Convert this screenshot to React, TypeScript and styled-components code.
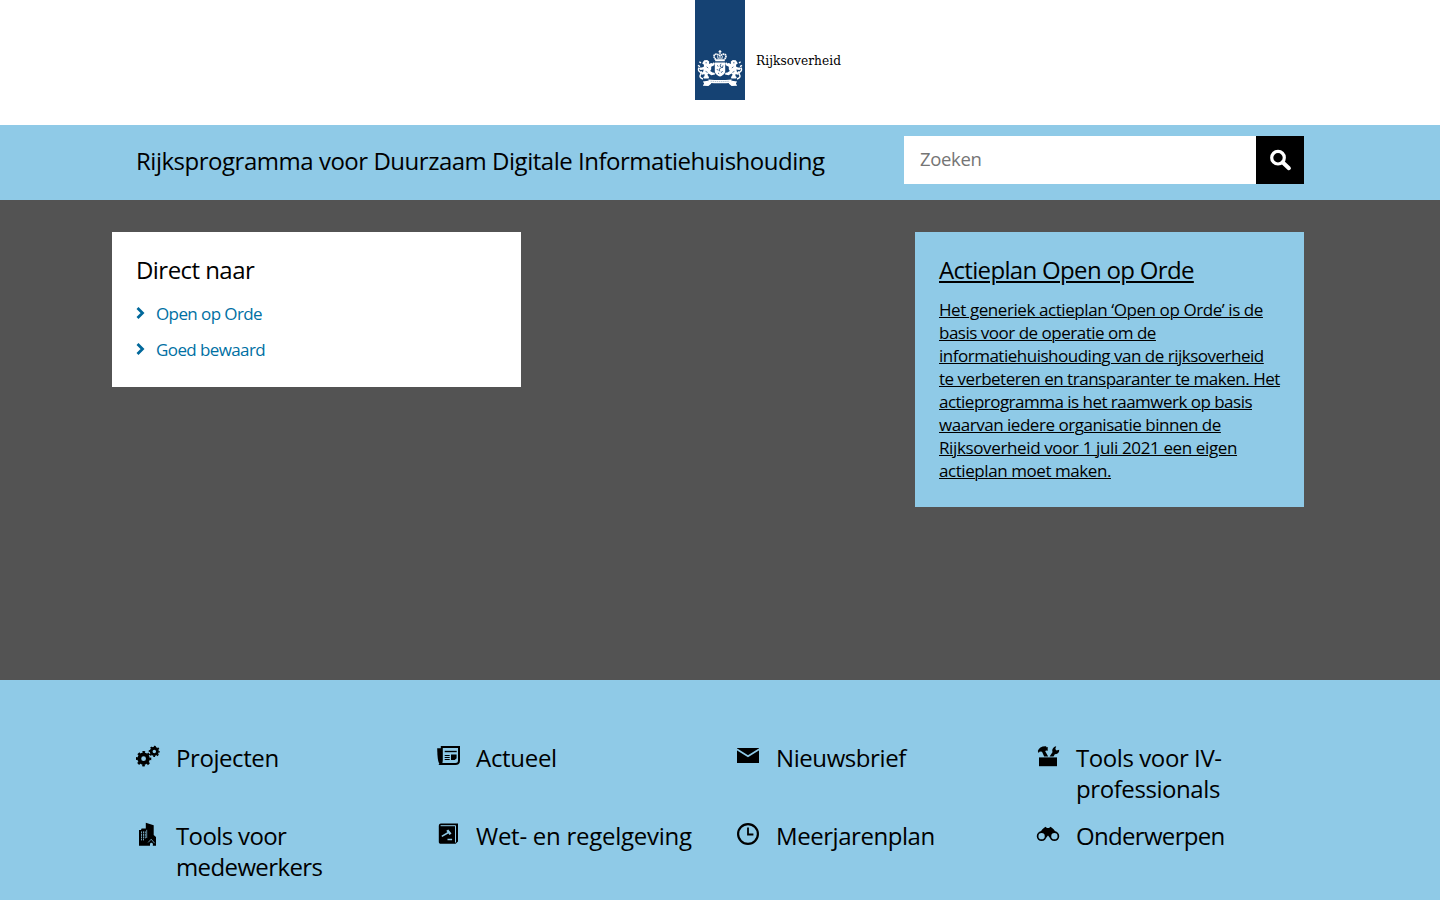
import React from 'react';
import styled, { createGlobalStyle } from 'styled-components';

const GlobalStyle = createGlobalStyle`
  *, *::before, *::after { box-sizing: border-box; }
  body {
    margin: 0;
    background: #fff;
    color: #000;
    font-family: "Open Sans", "Noto Sans", sans-serif;
    overflow: hidden;
  }
  h1, h2, p, ul { margin: 0; padding: 0; font-weight: 400; }
  ul { list-style: none; }
`;

const Page = styled.div`
  height: 900px;
  display: flex;
  flex-direction: column;
  overflow: hidden;
`;

const Header = styled.header`
  flex: none;
  height: 125px;
  display: flex;
  padding-left: 695px;
`;

const LogoRibbon = styled.svg`
  display: block;
  width: 50px;
  height: 100px;
`;

const LogoName = styled.span`
  margin: 50px 0 0 11px;
  font: 13.5px/20px "DejaVu Serif Condensed", "DejaVu Serif", serif;
  font-stretch: condensed;
  letter-spacing: 0.06px;
`;

const TitleBar = styled.div`
  flex: none;
  height: 75px;
  padding: 11px 136px 0;
  background: #8fcae7;
  display: flex;
  justify-content: space-between;
  align-items: flex-start;
`;

const SiteTitle = styled.h1`
  font-size: 24px;
  line-height: 49px;
  letter-spacing: -0.48px;
  white-space: nowrap;
`;

const SearchForm = styled.form`
  display: flex;
  width: 400px;
  height: 48px;
`;

const SearchInput = styled.input`
  flex: 1;
  min-width: 0;
  border: 0;
  border-radius: 0;
  background: #fff;
  padding: 0 16px 3px;
  font: 18.5px "Open Sans", sans-serif;
  letter-spacing: -0.35px;
  &::placeholder { color: #757575; opacity: 1; }
`;

const SearchButton = styled.button`
  width: 48px;
  border: 0;
  padding: 0;
  background: #000;
  display: grid;
  place-items: center;
`;

const Hero = styled.section`
  flex: none;
  height: 480px;
  padding: 32px 136px 0 112px;
  background: #535353;
  display: flex;
  justify-content: space-between;
  align-items: flex-start;
`;

const Card = styled.div<{ $width: number; $height: number; $tone: string }>`
  width: ${p => p.$width}px;
  height: ${p => p.$height}px;
  padding: 24px;
  background: ${p => p.$tone};
`;

const CardTitle = styled.h2<{ $tracking: number }>`
  font-size: 24px;
  line-height: 28px;
  letter-spacing: ${p => p.$tracking}px;
`;

const ShortcutList = styled.ul`
  margin-top: 12px;
`;

const Shortcut = styled.li`
  height: 36px;
  display: flex;
  align-items: center;
`;

const ShortcutLink = styled.a`
  display: flex;
  align-items: center;
  gap: 10px;
  color: #0070a3;
  font-size: 17px;
  line-height: 36px;
  letter-spacing: -0.6px;
  text-decoration: none;
`;

const Chevron = styled.svg`
  width: 10px;
  height: 12px;
  margin-bottom: 2px;
`;

const PlanLink = styled.a`
  color: #000;
  text-decoration: none;
`;

const PlanTitle = styled(CardTitle)`
  text-decoration: underline;
  text-decoration-thickness: 2px;
  text-underline-offset: 2px;
`;

const PlanText = styled.p`
  margin-top: 14px;
  font-size: 17px;
  line-height: 23px;
`;

const PlanLine = styled.span<{ $tracking: number }>`
  display: block;
  white-space: nowrap;
  letter-spacing: ${p => p.$tracking}px;
  text-decoration: underline;
  text-decoration-thickness: 1px;
  text-underline-offset: 1px;
`;

const Themes = styled.nav`
  flex: 1;
  padding: 62px 0 0 136px;
  background: #8fcae7;
`;

const ThemeGrid = styled.ul`
  display: grid;
  grid-template-columns: repeat(4, 300px);
  row-gap: 16px;
`;

const ThemeItem = styled.li`
  display: flex;
  gap: 16px;
  padding-right: 24px;
`;

const ThemeIcon = styled.svg`
  flex: none;
  width: 24px;
  height: 24px;
  margin-top: 2px;
`;

const ThemeLabel = styled.span<{ $tracking: number }>`
  font-size: 24px;
  line-height: 31px;
  letter-spacing: ${p => p.$tracking}px;
`;

const BLUE = '#8fcae7';

const Lion = () => (
  <g>
    <path
      d="M8 62l1.200-1.800 3-.2 2 1.600-.2 2.400 2.200-1 1.600.4.8-1.200 1.200 1-.6 2-3 1.600v2.400l-1 1.800 2.400 1.600 2 .2.400 1.800-3.600.6-3-1.800-1 1.400 1.600 2.400-.4 1.400H9l-.8-1.400 1.400-1.200-.2-2-2 .8-1.400-.8 2.200-2.600.4-2-3 .6-1.600-1.200.8-1.400 2.200.2 2-1-.2-2.200-1.600-.8z"
      fill="#fff"
    />
    <path d="M8 79c-3-1-3.600-2.600-2.600-4.200s.6-2.400-.8-3.200-1.400-2.600-.6-4M5 66.600l-2-1.200M6 63l-1.600-1.200M7.400 72.800l-1.600-1.200" fill="none" stroke="#fff" strokeWidth="1.400" />
    <path d="M10.400 62.800h1.600M11.600 66.800l1.600 1.200M10.600 71.400l2 1" stroke="#154273" strokeWidth=".7" />
  </g>
);

const CoatOfArms = () => (
  <LogoRibbon viewBox="0 0 50 100" aria-hidden="true">
    <rect width="50" height="100" fill="#154273" />
    <path d="M25 50v4M23.600 51.600h2.800" stroke="#fff" strokeWidth="1.200" />
    <path d="M20.800 59.600c-3-3-1.800-5.400.4-5.400 1.800 0 2.800 1.200 3.800 1.200s2-1.200 3.800-1.200c2.200 0 3.400 2.400.4 5.400" fill="none" stroke="#fff" strokeWidth="1.700" strokeDasharray="1.600 .4" />
    <path d="M25 55.500v4M22.600 56.200l.7 3M27.400 56.200l-.7 3" stroke="#fff" strokeWidth="1" />
    <rect x="20.200" y="59.200" width="9.600" height="2" rx=".5" fill="#fff" />
    <path d="M19.800 62.500h10.400v8.500c0 3-2.600 4.400-5.200 5.600-2.600-1.200-5.200-2.600-5.200-5.600z" fill="#fff" />
    <path d="M22 65.400l1.400 1M26 63.800l-1 2.400 1.800 1.200-2.600 1.600.6 2.400M28 65.400l-.6 2.600M21.800 69l1.400 1.600M27.600 71l-1.400 1.800M23 73l1.200.8" fill="none" stroke="#154273" strokeWidth=".8" />
    <Lion />
    <g transform="translate(50 0) scale(-1 1)"><Lion /></g>
    <path d="M13.500 79.500q11.500 1 23 0l.4 3.200q-11.900 1-23.800 0z" fill="#fff" />
    <path d="M12.900 80.800l-5 .8 1.200 2-1.300 2.200 5.600.2 3-2.400M37.100 80.800l5 .8-1.200 2 1.300 2.200-5.600.2-3-2.400" fill="#fff" />
    <path d="M15.500 81.200q9.500.8 19 0" fill="none" stroke="#154273" strokeWidth=".35" strokeDasharray="1.400 .7" />
  </LogoRibbon>
);

const Gear = ({ x, y, r }: { x: number; y: number; r: number }) => {
  const tooth = (2 * Math.PI * r * 0.86) / 16;
  return (
    <g fill="none" stroke="#000">
      <circle cx={x} cy={y} r={r * 0.56} strokeWidth={r * 0.5} />
      <circle cx={x} cy={y} r={r * 0.86} strokeWidth={r * 0.28} strokeDasharray={`${tooth} ${tooth}`} strokeDashoffset={tooth / 2} />
    </g>
  );
};

const GearsIcon = () => (
  <>
    <Gear x={7.6} y={14.7} r={7.7} />
    <Gear x={18.3} y={7.4} r={5.6} />
  </>
);

const NewspaperIcon = () => (
  <>
    <path d="M1.200 4.200h4v16.600H4.600C2 19.800 1.400 14 1.200 4.200z" />
    <path d="M5.800 3h17.200v13.500c0 2.300-1.200 3.500-3.500 3.500H4.800c1-1 1-2 1-4z" fill="none" stroke="#000" strokeWidth="2" />
    <path d="M8.700 7.500h12" stroke="#000" strokeWidth="1.400" />
    <path d="M8.700 11.500h5M8.700 13.500h5M8.700 15.500h5" stroke="#000" strokeWidth="1" />
    <path d="M15 10.600h5.600v3.600l-1.800 1.800H15z" />
  </>
);

const EnvelopeIcon = () => (
  <>
    <rect x="1" y="4" width="22" height="15" />
    <path d="M.8 5.300l11.200 7 11.200-7" fill="none" stroke={BLUE} strokeWidth="1.700" />
  </>
);

const ToolboxIcon = () => (
  <>
    <rect x="3" y="13.400" width="18" height="8.800" />
    <path d="M1.800 7C3 3.600 5.600 2.100 10.200 2.300v.9l1.500-.2v3.800l-1.700-.4-.8.800 3 5.200H8.200L6 7.800l-2.200-.2L2.600 9z" />
    <path d="M13.600 12.600l3-4.600c-1-2.400.6-5.400 3.600-5.800l-.9 2.800 1.200 1.500 2.700-.7c.3 3-2.200 4.800-4.200 4.300l-1.500 2.500z" />
  </>
);

const BuildingIcon = () => (
  <>
    <path d="M9.800 6.400V.8l7.900 2.400V13l2.300 2v8.800H3V8h2l.6-1.400z" />
    <path d="M10.700 7.800V16" stroke={BLUE} strokeWidth=".7" />
    <path d="M5.500 9.400v9M7.500 9.400v9M9.300 9.400v7" stroke={BLUE} strokeWidth=".8" strokeDasharray="2 .5" />
    <path d="M12.200 20.400l3-3.200 3.400 4" fill="none" stroke={BLUE} strokeWidth=".7" />
    <path d="M14 22.200a1.400 1.400 0 0 1 2.800 0V24H14z" fill={BLUE} />
  </>
);

const LawBookIcon = () => (
  <>
    <path d="M5 1.500h17V19.500l-2.400 2.300H5c-1.500 0-2.200-.6-2.200-2V4c0-1.600.7-2.500 2.200-2.500z" />
    <path d="M4.600 3.700h14.900v16.800" fill="none" stroke={BLUE} strokeWidth="1" />
    <path d="M5.800 14.300l6.600-3.800" stroke={BLUE} strokeWidth="1.500" />
    <path d="M10.300 8.800l2-1.400 3.200 4.200-1.900 1.400z" fill={BLUE} />
    <path d="M11.500 17.500h4.600" stroke={BLUE} strokeWidth="1.500" />
  </>
);

const ClockIcon = () => (
  <g fill="none" stroke="#000" strokeWidth="2.200">
    <circle cx="12" cy="12" r="9.900" />
    <path d="M12 5.500v7h5.400" strokeWidth="1.800" />
  </g>
);

const BinocularsIcon = () => (
  <>
    <path d="M6.400 7.200l3-2.400 1.600 1.200h2l1.600-1.200 3 2.400 4 5.300-3 3.500-5-.5-1.600-2-1.600 2-5 .5-3-3.500z" />
    <circle cx="5.600" cy="14.200" r="4" fill={BLUE} stroke="#000" strokeWidth="1.700" />
    <circle cx="18.400" cy="14.200" r="4" fill={BLUE} stroke="#000" strokeWidth="1.700" />
  </>
);

const planLines: [string, number][] = [
  ['Het generiek actieplan ‘Open op Orde’ is de', -0.42],
  ['basis voor de operatie om de', -0.49],
  ['informatiehuishouding van de rijksoverheid', -0.49],
  ['te verbeteren en transparanter te maken. Het', -0.48],
  ['actieprogramma is het raamwerk op basis', -0.52],
  ['waarvan iedere organisatie binnen de', -0.47],
  ['Rijksoverheid voor 1 juli 2021 een eigen', -0.37],
  ['actieplan moet maken.', -0.43],
];

const themes: { label: string; tracking: number; icon: React.ReactNode }[] = [
  { label: 'Projecten', tracking: -0.42, icon: <GearsIcon /> },
  { label: 'Actueel', tracking: -0.3, icon: <NewspaperIcon /> },
  { label: 'Nieuwsbrief', tracking: -0.42, icon: <EnvelopeIcon /> },
  { label: 'Tools voor IV-professionals', tracking: -0.42, icon: <ToolboxIcon /> },
  { label: 'Tools voor medewerkers', tracking: -0.62, icon: <BuildingIcon /> },
  { label: 'Wet- en regelgeving', tracking: -0.26, icon: <LawBookIcon /> },
  { label: 'Meerjarenplan', tracking: -0.45, icon: <ClockIcon /> },
  { label: 'Onderwerpen', tracking: -0.68, icon: <BinocularsIcon /> },
];

export default function App() {
  return (
    <Page>
      <GlobalStyle />
      <Header>
        <CoatOfArms />
        <LogoName>Rijksoverheid</LogoName>
      </Header>
      <TitleBar>
        <SiteTitle>Rijksprogramma voor Duurzaam Digitale Informatiehuishouding</SiteTitle>
        <SearchForm>
          <SearchInput placeholder="Zoeken" aria-label="Zoeken" />
          <SearchButton type="button" aria-label="Zoek">
            <svg width="24" height="24" viewBox="0 0 24 24" fill="none" stroke="#fff">
              <circle cx="10" cy="9.700" r="6.300" strokeWidth="3.200" />
              <path d="M14.600 14.300l6.300 5.900" strokeWidth="4" strokeLinecap="round" />
            </svg>
          </SearchButton>
        </SearchForm>
      </TitleBar>
      <Hero>
        <Card $width={409} $height={155} $tone="#fff">
          <CardTitle $tracking={-0.55}>Direct naar</CardTitle>
          <ShortcutList>
            {['Open op Orde', 'Goed bewaard'].map(label => (
              <Shortcut key={label}>
                <ShortcutLink>
                  <Chevron viewBox="0 0 10 12" aria-hidden="true">
                    <path d="M1.500 1l5 5-5 5" fill="none" stroke="#01689b" strokeWidth="2.800" />
                  </Chevron>
                  {label}
                </ShortcutLink>
              </Shortcut>
            ))}
          </ShortcutList>
        </Card>
        <Card $width={389} $height={275} $tone={BLUE}>
          <PlanLink>
            <PlanTitle $tracking={-0.67}>Actieplan Open op Orde</PlanTitle>
            <PlanText>
              {planLines.map(([text, tracking]) => (
                <PlanLine key={text} $tracking={tracking}>{text}</PlanLine>
              ))}
            </PlanText>
          </PlanLink>
        </Card>
      </Hero>
      <Themes>
        <ThemeGrid>
          {themes.map(({ label, tracking, icon }) => (
            <ThemeItem key={label}>
              <ThemeIcon viewBox="0 0 24 24" aria-hidden="true">{icon}</ThemeIcon>
              <ThemeLabel $tracking={tracking}>{label}</ThemeLabel>
            </ThemeItem>
          ))}
        </ThemeGrid>
      </Themes>
    </Page>
  );
}
